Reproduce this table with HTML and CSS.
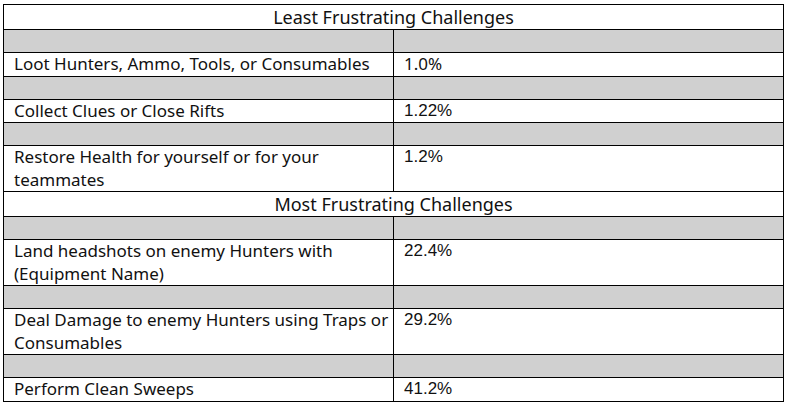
FILE: index.html
```html
<!DOCTYPE html>
<html>
<head>
<meta charset="utf-8">
<link rel="stylesheet" href="styles.css">
</head>
<body>
<table class="grid">
  <colgroup><col class="c1"><col class="c2"></colgroup>
  <tr class="title"><td colspan="2">Least Frustrating Challenges</td></tr>
  <tr class="shade"><td></td><td></td></tr>
  <tr><td>Loot Hunters, Ammo, Tools, or Consumables</td><td class="apt">1.0%</td></tr>
  <tr class="shade"><td></td><td></td></tr>
  <tr><td>Collect Clues or Close Rifts</td><td class="num">1.22%</td></tr>
  <tr class="shade"><td></td><td></td></tr>
  <tr><td>Restore Health for yourself or for your teammates</td><td class="num">1.2%</td></tr>
  <tr class="title"><td colspan="2">Most Frustrating Challenges</td></tr>
  <tr class="shade"><td></td><td></td></tr>
  <tr><td>Land headshots on enemy Hunters with (Equipment Name)</td><td class="num">22.4%</td></tr>
  <tr class="shade"><td></td><td></td></tr>
  <tr><td>Deal Damage to enemy Hunters using Traps or Consumables</td><td class="num">29.2%</td></tr>
  <tr class="shade"><td></td><td></td></tr>
  <tr><td>Perform Clean Sweeps</td><td class="num">41.2%</td></tr>
</table>
</body>
</html>
```
FILE: styles.css
```css
html, body { margin: 0; padding: 0; background: #fff; }
body { padding: 4px 0 0 3px; }
.grid {
  border-collapse: collapse;
  width: 781px;
  table-layout: fixed;
  font-family: "Noto Sans", sans-serif;
  font-size: 17px;
  color: #111;
}
.c1 { width: 390px; }
.grid td {
  border: 1px solid #000;
  padding: 0 1px 0 10px;
  height: 22px;
  line-height: 22.5px;
  vertical-align: top;
}
.shade td { background: #d0d0d0; }
.title td { text-align: center; font-size: 18px; line-height: 24px; padding: 0; }
.num { font-family: "Liberation Sans", sans-serif; font-size: 17px; }
.apt { font-family: "Noto Sans", sans-serif; }
```
